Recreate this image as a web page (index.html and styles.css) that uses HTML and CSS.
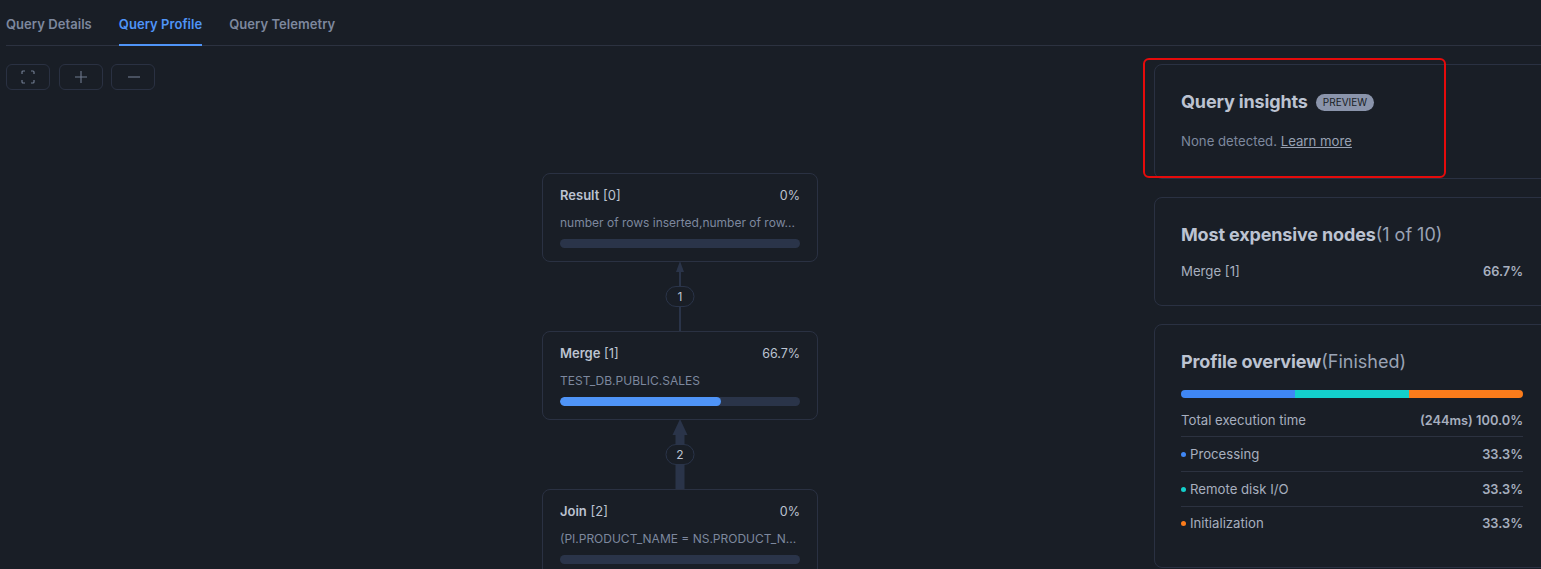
FILE: index.html

```html
<!DOCTYPE html>
<html lang="en">
<head>
    <meta charset="UTF-8">
    <meta name="viewport" content="width=device-width, initial-scale=1.0">
    <title>Query Profile</title>
    <link rel="stylesheet" href="styles.css">
</head>
<body>
<div class="page">
    <nav class="tabs">
        <a class="tab">Query Details</a>
        <a class="tab active">Query Profile</a>
        <a class="tab">Query Telemetry</a>
    </nav>

    <div class="content">
        <div class="canvas">
            <div class="tools">
                <button class="tool" type="button">
                    <svg width="14" height="14" viewBox="0 0 14 14" fill="none" stroke="#6f7a8e" stroke-width="1.2"><path d="M1 4V2a1 1 0 0 1 1-1h2M10 1h2a1 1 0 0 1 1 1v2M13 10v2a1 1 0 0 1-1 1h-2M4 13H2a1 1 0 0 1-1-1v-2"/></svg>
                </button>
                <button class="tool" type="button">
                    <svg width="14" height="14" viewBox="0 0 14 14" fill="none" stroke="#6f7a8e" stroke-width="1.1"><path d="M7 1v12M1 7h12"/></svg>
                </button>
                <button class="tool" type="button">
                    <svg width="14" height="14" viewBox="0 0 14 14" fill="none" stroke="#6f7a8e" stroke-width="1.1"><path d="M2 7h12"/></svg>
                </button>
            </div>

            <div class="graph">
                <div class="node">
                    <div class="node-head"><span><b>Result</b> [0]</span><span class="node-pct">0%</span></div>
                    <div class="node-desc">number of rows inserted,number of row...</div>
                    <div class="bar"></div>
                </div>
                <div class="edge">
                    <svg class="edge-line" width="20" height="70" viewBox="0 0 20 70"><path d="M10 0l4 11H6z" fill="#2a3449"/><path d="M10 10v60" stroke="#2a3449" stroke-width="2"/></svg>
                    <span class="edge-count">1</span>
                </div>
                <div class="node">
                    <div class="node-head"><span><b>Merge</b> [1]</span><span class="node-pct">66.7%</span></div>
                    <div class="node-desc">TEST_DB.PUBLIC.SALES</div>
                    <div class="bar"><div class="bar-fill" style="width:67%"></div></div>
                </div>
                <div class="edge">
                    <svg class="edge-line" width="20" height="70" viewBox="0 0 20 70"><path d="M10 0l7.500 16H2.500z" fill="#2a3449"/><path d="M10 15v55" stroke="#2a3449" stroke-width="9"/></svg>
                    <span class="edge-count">2</span>
                </div>
                <div class="node">
                    <div class="node-head"><span><b>Join</b> [2]</span><span class="node-pct">0%</span></div>
                    <div class="node-desc">(PI.PRODUCT_NAME = NS.PRODUCT_N...</div>
                    <div class="bar"></div>
                </div>
            </div>
        </div>

        <aside class="side">
            <section class="panel insights">
                <h2 class="panel-title">Query insights <span class="badge">PREVIEW</span></h2>
                <p class="insights-text">None detected. <a class="link">Learn more</a></p>
            </section>

            <section class="panel expensive">
                <h2 class="panel-title">Most expensive nodes<span class="light">(1 of 10)</span></h2>
                <div class="row plain"><span>Merge [1]</span><span class="val">66.7%</span></div>
            </section>

            <section class="panel overview">
                <h2 class="panel-title">Profile overview<span class="light">(Finished)</span></h2>
                <div class="stack">
                    <div class="seg blue"></div>
                    <div class="seg teal"></div>
                    <div class="seg orange"></div>
                </div>
                <div class="row first"><span>Total execution time</span><span class="val">(244ms) 100.0%</span></div>
                <div class="row"><span><i class="dot blue"></i>Processing</span><span class="val">33.3%</span></div>
                <div class="row"><span><i class="dot teal"></i>Remote disk I/O</span><span class="val">33.3%</span></div>
                <div class="row plain last"><span><i class="dot orange"></i>Initialization</span><span class="val">33.3%</span></div>
            </section>
        </aside>
    </div>

    <div class="highlight"></div>
</div>
</body>
</html>
```

FILE: styles.css

```css
* { box-sizing: border-box; }
html, body { margin: 0; height: 100%; overflow: hidden; }
body { font-family: Inter, "Noto Sans", sans-serif; font-size: 13px; background: #191e26; color: #bcc3d1; }
h2, p { margin: 0; }

.page { position: relative; height: 569px; overflow: hidden; }

.tabs { display: flex; gap: 27px; height: 46px; margin-left: 6px; border-bottom: 1px solid #2c3240; }
.tab { height: 46px; padding-top: 16px; font-size: 13px; line-height: 17px; font-weight: 600; letter-spacing: 0.05px; color: #7d889e; }
.tab.active { color: #4f94f7; border-bottom: 2px solid #4f94f7; }

.content { display: flex; }
.canvas { width: 1154px; flex: none; }
.tools { display: flex; gap: 9px; padding: 18px 0 0 6px; height: 128px; }
.tool { width: 44px; height: 26px; padding: 0; display: flex; align-items: center; justify-content: center; background: transparent; border: 1px solid #2a3142; border-radius: 6px; }
.tool + .tool + .tool { margin-left: -1px; }

.graph { width: 276px; margin-left: 542px; margin-top: -1px; }
.node { height: 89px; padding: 12px 17px 0; border: 1px solid #2a3142; border-radius: 8px; }
.node-head { display: flex; justify-content: space-between; align-items: baseline; line-height: 18px; font-size: 13px; color: #bcc3d1; }
.node-head b { font-weight: 600; }
.node-pct { font-size: 12.500px; }
.node-desc { margin-top: 9px; font-size: 12px; line-height: 18px; color: #7d889e; white-space: nowrap; }
.bar { height: 9px; margin-top: 7px; border-radius: 5px; background: #2a3449; overflow: hidden; }
.bar-fill { height: 100%; border-radius: 5px; background: #4f94f7; }

.edge { position: relative; height: 69px; display: flex; justify-content: center; }
.edge-line { display: block; margin-top: -1px; }
.edge-count { position: absolute; left: 50%; top: 24px; transform: translateX(-50%); min-width: 29px; height: 21px; padding: 0 8px; border: 1px solid #2a3449; border-radius: 11px; background: #191e26; font-size: 12px; line-height: 19px; text-align: center; color: #bcc3d1; }

.side { width: 396px; flex: none; margin-top: 18px; }
.panel { padding: 0 26px; border: 1px solid #2a3142; border-radius: 8px; margin-bottom: 18px; }
.panel-title { font-size: 18px; line-height: 26px; font-weight: 700; color: #bcc3d1; letter-spacing: -0.15px; }
.light { font-weight: 400; color: #9aa3b5; letter-spacing: 0; }

.insights { height: 115px; padding-top: 24px; }
.badge { display: inline-block; vertical-align: 2px; margin-left: 4px; height: 17px; padding: 0 7px; border-radius: 9px; background: #8a94ab; color: #191e26; font-size: 10px; font-weight: 400; line-height: 17px; letter-spacing: 0; }
.insights-text { margin-top: 17px; font-size: 13.200px; line-height: 18px; color: #7d889e; }
.link { color: #98a1b3; text-decoration: underline; }

.expensive { height: 109px; padding-top: 24px; }
.expensive .row { margin-top: 6px; }

.overview { height: 244px; padding-top: 24px; }
.stack { display: flex; height: 8px; margin-top: 15px; border-radius: 4px; overflow: hidden; }
.seg { flex: 1; }
.seg.blue, .dot.blue { background: #3f87f5; }
.seg.teal, .dot.teal { background: #13cfcb; }
.seg.orange, .dot.orange { background: #fb7c1b; }

.row { display: flex; justify-content: space-between; align-items: baseline; height: 35px; padding-top: 8px; border-bottom: 1px solid #2c3240; font-size: 13.200px; line-height: 18px; color: #a7afbf; }
.row.first { margin-top: 5px; height: 34px; }
.row.last { height: 31px; padding-top: 7px; }
.row.plain { border-bottom: 0; }
.val { font-size: 12.800px; font-weight: 600; color: #a7afbf; }
.dot { display: inline-block; width: 5px; height: 5px; margin-right: 4px; border-radius: 50%; vertical-align: 2px; }

.highlight { position: absolute; left: 1143px; top: 58px; width: 303px; height: 120px; border: 2px solid #e50b0b; border-radius: 6px; }
```
